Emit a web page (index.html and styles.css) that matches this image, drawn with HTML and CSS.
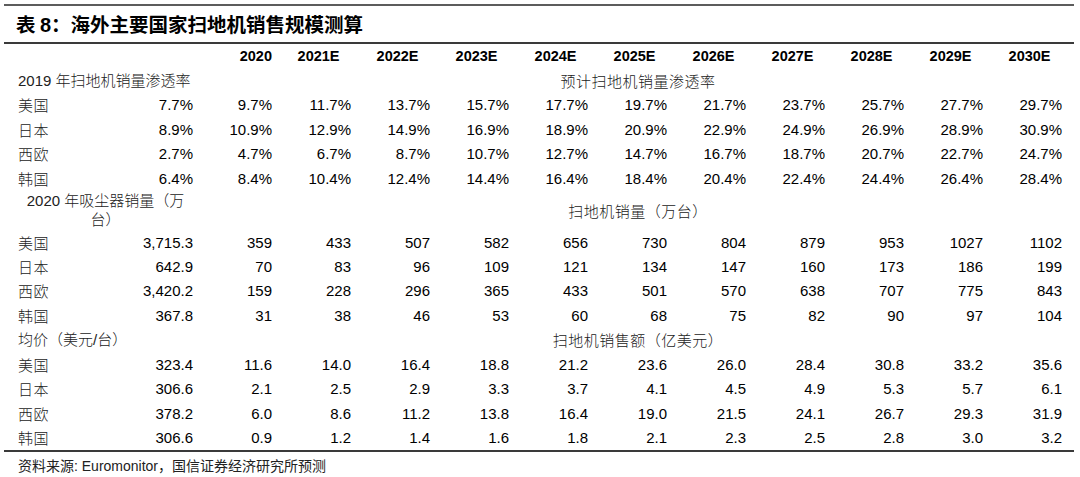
FILE: index.html
```html
<!DOCTYPE html>
<html lang="zh-CN">
<head>
<meta charset="utf-8">
<title>表8：海外主要国家扫地机销售规模测算</title>
<link rel="stylesheet" href="styles.css">
</head>
<body>
<div class="report">
  <h1 class="title">表 <span class="num">8</span>：海外主要国家扫地机销售规模测算</h1>
  <div class="table">
    <div class="row head">
      <div class="span2"></div>
      <div class="h first">2020</div><div class="h">2021E</div><div class="h">2022E</div><div class="h">2023E</div><div class="h">2024E</div><div class="h">2025E</div><div class="h">2026E</div><div class="h">2027E</div><div class="h">2028E</div><div class="h">2029E</div><div class="h">2030E</div>
    </div>

    <div class="row section">
      <div class="span2 left">2019 年扫地机销量渗透率</div>
      <div class="span11">预计扫地机销量渗透率</div>
    </div>
    <div class="row"><div class="lab">美国</div><div>7.7%</div><div>9.7%</div><div>11.7%</div><div>13.7%</div><div>15.7%</div><div>17.7%</div><div>19.7%</div><div>21.7%</div><div>23.7%</div><div>25.7%</div><div>27.7%</div><div>29.7%</div></div>
    <div class="row"><div class="lab">日本</div><div>8.9%</div><div>10.9%</div><div>12.9%</div><div>14.9%</div><div>16.9%</div><div>18.9%</div><div>20.9%</div><div>22.9%</div><div>24.9%</div><div>26.9%</div><div>28.9%</div><div>30.9%</div></div>
    <div class="row"><div class="lab">西欧</div><div>2.7%</div><div>4.7%</div><div>6.7%</div><div>8.7%</div><div>10.7%</div><div>12.7%</div><div>14.7%</div><div>16.7%</div><div>18.7%</div><div>20.7%</div><div>22.7%</div><div>24.7%</div></div>
    <div class="row"><div class="lab">韩国</div><div>6.4%</div><div>8.4%</div><div>10.4%</div><div>12.4%</div><div>14.4%</div><div>16.4%</div><div>18.4%</div><div>20.4%</div><div>22.4%</div><div>24.4%</div><div>26.4%</div><div>28.4%</div></div>

    <div class="row section tall">
      <div class="span2 center">2020 年吸尘器销量（万<br>台）</div>
      <div class="span11">扫地机销量（万台）</div>
    </div>
    <div class="row"><div class="lab">美国</div><div>3,715.3</div><div>359</div><div>433</div><div>507</div><div>582</div><div>656</div><div>730</div><div>804</div><div>879</div><div>953</div><div>1027</div><div>1102</div></div>
    <div class="row"><div class="lab">日本</div><div>642.9</div><div>70</div><div>83</div><div>96</div><div>109</div><div>121</div><div>134</div><div>147</div><div>160</div><div>173</div><div>186</div><div>199</div></div>
    <div class="row"><div class="lab">西欧</div><div>3,420.2</div><div>159</div><div>228</div><div>296</div><div>365</div><div>433</div><div>501</div><div>570</div><div>638</div><div>707</div><div>775</div><div>843</div></div>
    <div class="row"><div class="lab">韩国</div><div>367.8</div><div>31</div><div>38</div><div>46</div><div>53</div><div>60</div><div>68</div><div>75</div><div>82</div><div>90</div><div>97</div><div>104</div></div>

    <div class="row section">
      <div class="span2 left">均价（美元/台）</div>
      <div class="span11">扫地机销售额（亿美元）</div>
    </div>
    <div class="row"><div class="lab">美国</div><div>323.4</div><div>11.6</div><div>14.0</div><div>16.4</div><div>18.8</div><div>21.2</div><div>23.6</div><div>26.0</div><div>28.4</div><div>30.8</div><div>33.2</div><div>35.6</div></div>
    <div class="row"><div class="lab">日本</div><div>306.6</div><div>2.1</div><div>2.5</div><div>2.9</div><div>3.3</div><div>3.7</div><div>4.1</div><div>4.5</div><div>4.9</div><div>5.3</div><div>5.7</div><div>6.1</div></div>
    <div class="row"><div class="lab">西欧</div><div>378.2</div><div>6.0</div><div>8.6</div><div>11.2</div><div>13.8</div><div>16.4</div><div>19.0</div><div>21.5</div><div>24.1</div><div>26.7</div><div>29.3</div><div>31.9</div></div>
    <div class="row"><div class="lab">韩国</div><div>306.6</div><div>0.9</div><div>1.2</div><div>1.4</div><div>1.6</div><div>1.8</div><div>2.1</div><div>2.3</div><div>2.5</div><div>2.8</div><div>3.0</div><div>3.2</div></div>
  </div>
  <div class="source">资料来源: Euromonitor，国信证券经济研究所预测</div>
</div>
</body>
</html>
```

FILE: styles.css
```css
html, body {
  margin: 0;
  padding: 0;
  background: #ffffff;
}

body {
  width: 1080px;
  height: 477px;
  overflow: hidden;
  font-family: "Liberation Sans", Arial, "Noto Sans CJK SC", sans-serif;
  color: #000;
}

.report {
  margin: 4px 6px 0 4px;
  border-top: 2px solid #5c5c5c;
}

.title {
  margin: 0;
  height: 36px;
  line-height: 36px;
  padding-left: 12px;
  font-size: 19.5px;
  font-weight: 700;
  font-family: "Noto Sans CJK SC", sans-serif;
  color: #000;
  border-bottom: 2px solid #3a3a3a;
}

.title .num {
  font-family: "Liberation Sans", Arial, sans-serif;
  font-weight: 700;
  font-size: 20px;
}

.table {
  padding: 1.5px 0 0 14px;
  border-bottom: 2px solid #3a3a3a;
}

.row {
  display: grid;
  grid-template-columns: 96px 79px repeat(11, 79px);
  align-items: center;
  height: 24.45px;
  font-size: 15px;
  line-height: 19.8px;
}

.row > div {
  text-align: right;
  white-space: nowrap;
}

.row.head {
  height: 23px;
  font-size: 14.5px;
  font-weight: 700;
}

.row.head .h {
  padding-right: 11.5px;
}

.row.head .h.first {
  padding-right: 0;
}

.row > .lab {
  grid-column: 1;
  text-align: left;
  font-family: "Noto Sans CJK SC", sans-serif;
  font-weight: 300;
  color: #222;
  letter-spacing: 0.5px;
}

.row.head .span2 {
  grid-column: 1 / 3;
}

.section .span2 {
  grid-column: 1 / 3;
  font-family: "Liberation Sans", Arial, "Noto Sans CJK SC", sans-serif;
  font-weight: 300;
  color: #222;
}

.section .span2.left {
  text-align: left;
}

.section .span2.center {
  text-align: center;
  white-space: normal;
  line-height: 19.8px;
}

.section .span11 {
  grid-column: 3 / 14;
  text-align: center;
  padding-left: 21px;
  font-family: "Noto Sans CJK SC", sans-serif;
  font-weight: 300;
  color: #222;
  letter-spacing: 0.5px;
}

.row.tall {
  height: 39.55px;
}

.source {
  height: 29px;
  line-height: 29px;
  padding-left: 14px;
  font-size: 14px;
  font-family: "Liberation Sans", Arial, "Noto Sans CJK SC", sans-serif;
  color: #222;
}
```
